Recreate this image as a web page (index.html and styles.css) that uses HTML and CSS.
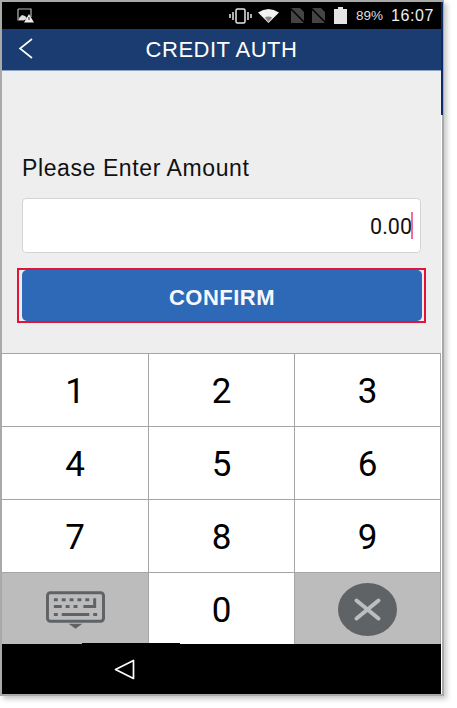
FILE: index.html
```html
<!DOCTYPE html>
<html lang="en">
<head>
<meta charset="utf-8">
<title>Credit Auth</title>
<link rel="stylesheet" href="styles.css">
</head>
<body>
<div class="frame">
  <div class="phone">
    <div class="edge-line"></div>
    <div class="statusbar">
      <svg class="ic-pic" viewBox="0 0 17 15"><path d="M1 1h13v8M1 1v11h6" fill="none" stroke="#b5b5b5" stroke-width="1.2"/><path d="M2 10l3-3 3 1 2 2-2 2H2z" fill="#ddd"/><path d="M12 6l5 8.500H7z" fill="#eee"/><path d="M12 9v3" stroke="#222" stroke-width="1"/></svg>
      <div class="status-right">
        <svg class="ic-vib" viewBox="0 0 23 16"><rect x="7" y="1" width="9" height="14" rx="1.500" fill="none" stroke="#e8e8e8" stroke-width="1.500"/><path d="M4 4v8M19 4v8M1 6v4M22 6v4" stroke="#e8e8e8" stroke-width="1.500"/></svg>
        <svg class="ic-wifi" viewBox="0 0 21 14"><path d="M0 3.500Q10.500-3.500 21 3.500L10.500 14z" fill="#f2f2f2"/><path d="M6.800 8.500Q10.500 6.500 14.200 8.500L10.500 13z" fill="#888"/></svg>
        <svg class="ic-sim" viewBox="0 0 15 15"><path d="M1 0h9l4 4v11H1z" fill="#444"/><path d="M0 0l15 15" stroke="#000" stroke-width="1.500"/></svg>
        <svg class="ic-sim" viewBox="0 0 15 15"><path d="M1 0h9l4 4v11H1z" fill="#444"/><path d="M0 0l15 15" stroke="#000" stroke-width="1.500"/></svg>
        <svg class="ic-batt" viewBox="0 0 13 17"><path d="M4 0h5v2h4v15H0V2h4z" fill="#e4e4e4"/></svg>
        <span class="pct">89%</span>
        <span class="clock">16:07</span>
      </div>
    </div>
    <header class="appbar">
      <svg class="back" viewBox="0 0 15 21"><path d="M14 1L2 10.500 14 20" fill="none" stroke="#fff" stroke-width="1.600"/></svg>
      <h1 class="title">CREDIT AUTH</h1>
    </header>
    <main class="content">
      <label class="prompt">Please Enter Amount</label>
      <div class="amount"><span>0.00</span><i class="caret"></i></div>
      <div class="highlight"><button class="confirm">CONFIRM</button></div>
    </main>
    <div class="keypad">
      <div class="key">1</div><div class="key">2</div><div class="key">3</div>
      <div class="key">4</div><div class="key">5</div><div class="key">6</div>
      <div class="key">7</div><div class="key">8</div><div class="key">9</div>
      <div class="key key-alt">
        <svg class="ic-kbd" viewBox="0 0 60 38"><rect x="1.500" y="1.500" width="57" height="29" rx="3" fill="none" stroke="#5f6366" stroke-width="3"/><g fill="#5f6366"><path d="M8 7h4v3H8zM16 7h4v3h-4zM24 7h4v3h-4zM32 7h4v3h-4zM40 7h4v3h-4zM48 7h3v10H38v-3h10zM8 14h8v3H8zM20 14h4v3h-4zM28 14h4v3h-4zM8 22h4v3H8zM16 22h28v3H16zM48 22h4v3h-4zM23 33h14l-7 5z"/></g></svg>
      </div>
      <div class="key">0</div>
      <div class="key key-alt">
        <svg class="ic-del" viewBox="0 0 59 53"><ellipse cx="29.500" cy="26.500" rx="29.500" ry="26.500" fill="#5f6366"/><path d="M18.500 17.500l22 18M40.500 17.500l-22 18" stroke="#bdbdbd" stroke-width="4" stroke-linecap="round"/></svg>
      </div>
    </div>
    <nav class="navbar">
      <svg class="nav-back" viewBox="0 0 21 21"><path d="M19.500 1.500v18L1.500 10.500z" fill="none" stroke="#fff" stroke-width="1.700" stroke-linejoin="round"/></svg>
    </nav>
  </div>
</div>
</body>
</html>
```
FILE: styles.css
```css
* { box-sizing: border-box; }
html, body { margin: 0; padding: 0; background: #fff; }
body { width: 457px; height: 708px; overflow: hidden; font-family: "Liberation Sans", Arial, sans-serif; }
.frame {
  width: 444px; height: 696px; padding: 2px 2px 2px 2px;
  background: #a9a9a9;
  box-shadow: 3px 3px 5px rgba(0,0,0,.22);
}
.phone {
  position: relative; width: 440px; height: 692px;
  display: flex; flex-direction: column; background: #eee;
  border-right: 1px solid #fff;
}
.edge-line { position: absolute; top: 0; right: -2px; width: 2px; height: 113px; background: #0d2a6b; }
.statusbar {
  height: 27px; background: #000; display: flex; align-items: center;
  justify-content: space-between; padding: 0 7px 0 15px; flex: none;
}
.status-right { display: flex; align-items: center; }
.ic-pic { width: 17px; height: 15px; display: block; }
.ic-vib { width: 23px; height: 16px; display: block; margin-right: 6px; }
.ic-wifi { width: 21px; height: 14px; display: block; margin-right: 11px; }
.ic-sim { width: 15px; height: 15px; display: block; margin-right: 6px; }
.ic-batt { width: 13px; height: 17px; display: block; margin: 0 9px 0 2px; }
.pct { color: #ddd; font: 13.500px "Liberation Sans", sans-serif; margin-right: 8px; }
.clock { color: #eee; font: 16px "Liberation Sans", sans-serif; letter-spacing: .6px; }
.appbar {
  height: 42px; flex: none; background: #1a3c70; border-bottom: 1px solid #8fa3c4;
  display: flex; align-items: center; justify-content: center; position: relative;
}
.back { position: absolute; left: 16px; top: 9px; width: 15px; height: 21px; }
.title { margin: 1px 0 0; color: #fff; font: 400 22px "Liberation Sans", sans-serif; letter-spacing: .5px; }
.content { flex: 1; display: flex; flex-direction: column; padding: 0 15px; background: #eee; }
.prompt { margin: 85px 0 0 5px; font: 23px "Liberation Sans", sans-serif; letter-spacing: .6px; color: #111; line-height: 24px; }
.amount {
  margin: 18px 5px 0; height: 55px; background: #fff; border: 1px solid #d4d4d4; border-radius: 4px;
  display: flex; align-items: center; justify-content: flex-end; padding: 2px 7px 0 0;
  font: 21.500px "Roboto", sans-serif; color: #111;
}
.amount span { margin-right: -1px; }
.caret { display: block; width: 2px; height: 27px; margin-top: -2px; background: #ea6f9b; }
.highlight { margin-top: 15px; height: 55px; border: 2px solid #e0143c; padding: 0 2px 0 3px; }
.confirm {
  display: block; width: 100%; height: 51px; border: 0; border-radius: 5px; background: #2e69b8;
  color: #f6f8fb; font: 700 22px "Liberation Sans", sans-serif; letter-spacing: .5px; padding: 4px 0 0;
}
.keypad {
  flex: none; height: 291px; display: grid;
  grid-template-columns: 147px 146px 146px; grid-template-rows: 73px 73px 73px 72px;
  border-top: 1px solid #a5a5a5;
}
.key {
  background: #fff; display: flex; align-items: center; justify-content: center;
  border-right: 1px solid #a5a5a5; border-bottom: 1px solid #a5a5a5; padding-top: 2px;
  font: 35px "Roboto", sans-serif; color: #000;
}
.key:nth-last-child(-n+3) { border-bottom: 0; }
.key-alt { background: #bcbcbc; padding-top: 0; }
.ic-kbd { width: 59px; height: 38px; display: block; margin-top: 2px; }
.ic-del { width: 59px; height: 53px; display: block; }
.navbar { height: 50px; flex: none; background: #000; display: flex; align-items: center; padding-left: 112px; position: relative; }
.navbar::before { content: ""; position: absolute; left: 80px; top: -1px; width: 98px; height: 1px; background: #000; }
.nav-back { width: 21px; height: 21px; display: block; }
```
